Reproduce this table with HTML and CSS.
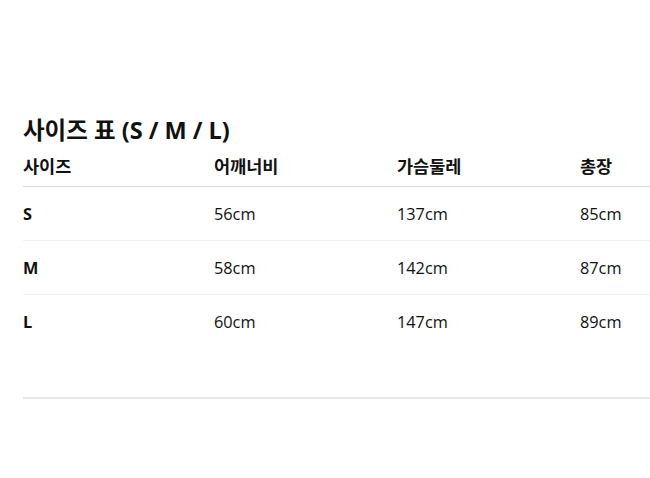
FILE: index.html
```html
<!DOCTYPE html>
<html lang="ko">
<head>
<meta charset="utf-8">
<link rel="stylesheet" href="styles.css">
</head>
<body>
<section class="size">
  <h2 class="title">사이즈 표 (S / M / L)</h2>
  <div class="table">
    <div class="row head">
      <div class="cell">사이즈</div>
      <div class="cell">어깨너비</div>
      <div class="cell">가슴둘레</div>
      <div class="cell">총장</div>
    </div>
    <div class="row">
      <div class="cell key">S</div>
      <div class="cell">56cm</div>
      <div class="cell">137cm</div>
      <div class="cell">85cm</div>
    </div>
    <div class="row">
      <div class="cell key">M</div>
      <div class="cell">58cm</div>
      <div class="cell">142cm</div>
      <div class="cell">87cm</div>
    </div>
    <div class="row last">
      <div class="cell key">L</div>
      <div class="cell">60cm</div>
      <div class="cell">147cm</div>
      <div class="cell">89cm</div>
    </div>
  </div>
  <div class="divider"></div>
</section>
</body>
</html>
```
FILE: styles.css
```css
html, body {
  margin: 0;
  padding: 0;
  background: #fff;
}
body {
  font-family: "Open Sans", "Noto Sans CJK KR", sans-serif;
  color: #111;
}
.size {
  padding: 112px 0 0 23px;
}
.title {
  margin: 0;
  font-size: 23.5px;
  font-weight: 700;
  line-height: 36px;
}
.table {
  margin-top: 1px;
}
.row {
  display: grid;
  grid-template-columns: 191px 183px 183px 1fr;
  height: 53px;
  align-items: center;
  border-bottom: 1px solid #f0f0f0;
  font-size: 16.3px;
}
.row.head {
  box-sizing: border-box;
  height: 38px;
  padding-bottom: 3px;
  border-bottom: 1px solid #d9d9d9;
  font-size: 17.5px;
  font-weight: 700;
}
.row.last {
  border-bottom: none;
}
.cell {
  line-height: 20px;
}
.key {
  font-weight: 700;
}
.divider {
  margin-top: 49px;
  height: 2px;
  background: #e6e6e6;
}
```
